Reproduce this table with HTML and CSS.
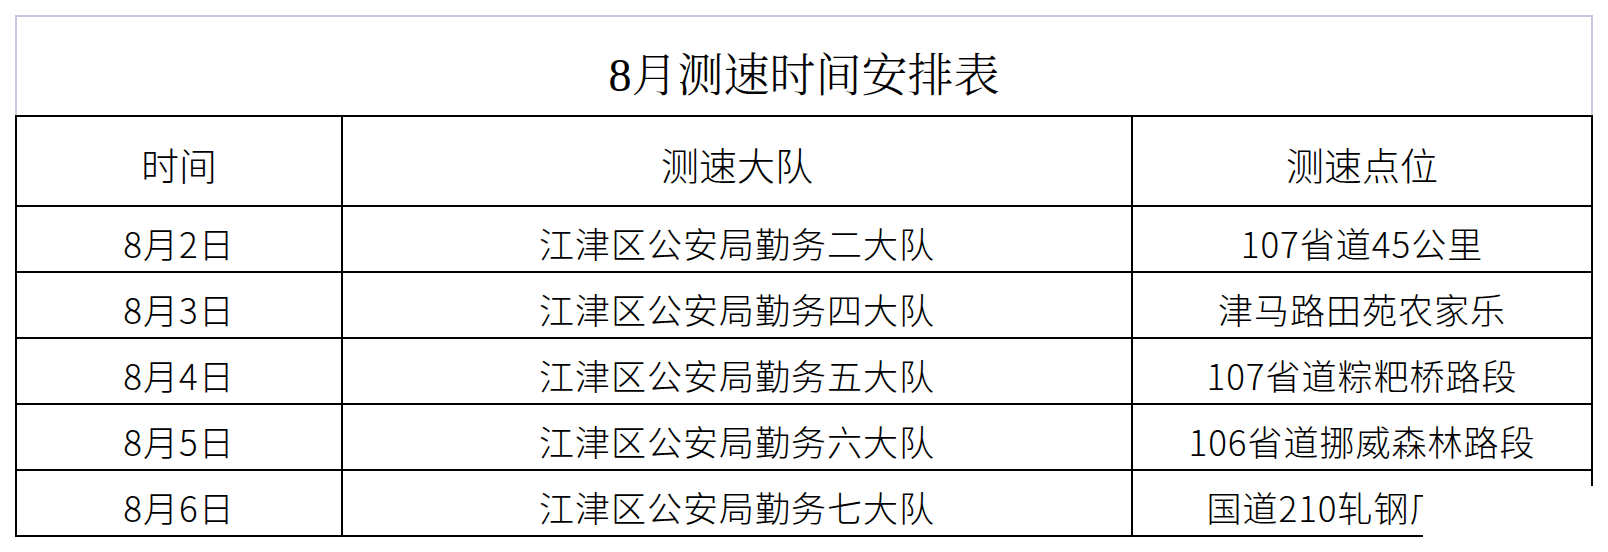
FILE: index.html
```html
<!DOCTYPE html>
<html lang="zh-CN">
<head>
<meta charset="utf-8">
<title>8月测速时间安排表</title>
<link rel="stylesheet" href="styles.css">
</head>
<body>
<div class="sheet">
  <div class="title">8月测速时间安排表</div>
  <div class="grid">
    <div class="cell head">时间</div>
    <div class="cell head">测速大队</div>
    <div class="cell head">测速点位</div>

    <div class="cell">8月2日</div>
    <div class="cell">江津区公安局勤务二大队</div>
    <div class="cell">107省道45公里</div>

    <div class="cell">8月3日</div>
    <div class="cell">江津区公安局勤务四大队</div>
    <div class="cell">津马路田苑农家乐</div>

    <div class="cell">8月4日</div>
    <div class="cell">江津区公安局勤务五大队</div>
    <div class="cell">107省道粽粑桥路段</div>

    <div class="cell">8月5日</div>
    <div class="cell">江津区公安局勤务六大队</div>
    <div class="cell">106省道挪威森林路段</div>

    <div class="cell">8月6日</div>
    <div class="cell">江津区公安局勤务七大队</div>
    <div class="cell">国道210轧钢厂路段</div>
  </div>
  <div class="mask"></div>
</div>
</body>
</html>
```

FILE: styles.css
```css
html, body {
  margin: 0;
  padding: 0;
  background: #ffffff;
}

body {
  width: 1608px;
  height: 552px;
  overflow: hidden;
  color: #000000;
  font-family: "Noto Sans CJK SC", "Liberation Sans", sans-serif;
}

.sheet {
  position: relative;
  width: 1578px;
  margin: 15px 0 0 15px;
}

.title {
  box-sizing: border-box;
  height: 100px;
  border: 2px solid #c5cbdc;
  border-bottom: none;
  display: flex;
  align-items: center;
  justify-content: center;
  padding-top: 10px;
  font-family: "Liberation Serif", "Noto Serif CJK SC", "Noto Sans CJK SC", serif;
  font-size: 46px;
  font-weight: 300;
}

.grid {
  display: grid;
  grid-template-columns: 326px 790px 460px;
  grid-template-rows: 90px repeat(5, 66px);
  border-top: 2px solid #000;
  border-left: 2px solid #000;
}

.cell {
  box-sizing: border-box;
  border-right: 2px solid #000;
  border-bottom: 2px solid #000;
  display: flex;
  align-items: center;
  justify-content: center;
  padding-top: 6px;
  font-size: 35px;
  font-weight: 300;
  letter-spacing: 1px;
  white-space: nowrap;
  overflow: hidden;
}

.cell.head {
  font-size: 38px;
  padding-top: 4px;
  letter-spacing: 0;
}

.mask {
  position: absolute;
  left: 1408px;
  top: 471px;
  width: 200px;
  height: 66px;
  background: #ffffff;
}
```
